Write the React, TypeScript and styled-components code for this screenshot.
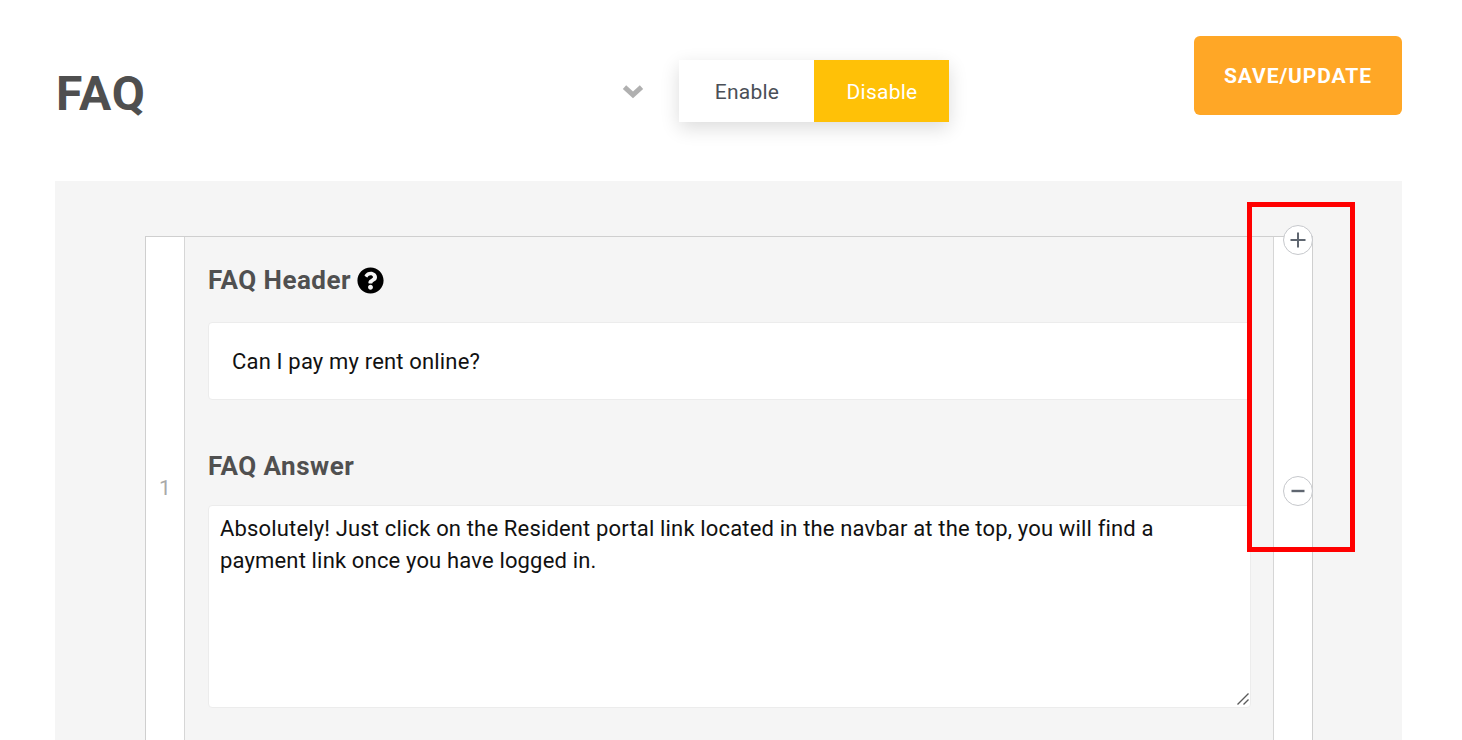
import React from "react";
import styled, { createGlobalStyle } from "styled-components";
import { FaQuestionCircle } from "react-icons/fa";

const Global = createGlobalStyle`
  html, body { margin: 0; height: 740px; overflow: hidden; background: #fff; }
  body { font-family: Roboto, "Liberation Sans", sans-serif; }
`;

const Page = styled.div`
  position: relative;
  padding: 36px 60px 0 55px;
`;

const Header = styled.header`
  display: flex;
  align-items: flex-start;
  height: 145px;
`;

const Title = styled.h1`
  flex: 1;
  margin: 28px 0 0 1px;
  font-size: 48px;
  line-height: 60px;
  font-weight: 700;
  letter-spacing: 1px;
  color: #4f4f4f;
`;

const Chevron = styled.svg`
  display: block;
  width: 22px;
  height: 15px;
  margin: 48px 35px 0 0;
`;

const Toggle = styled.div`
  display: flex;
  margin-top: 24px;
  box-shadow: 0 6px 18px rgba(0, 0, 0, 0.14);
`;

const ToggleOption = styled.div<{ $active?: boolean }>`
  width: 135px;
  height: 62px;
  padding: 1px 0 0 1px;
  box-sizing: border-box;
  display: flex;
  align-items: center;
  justify-content: center;
  font-size: 21px;
  letter-spacing: 0.25px;
  background: ${(p) => (p.$active ? "#ffc107" : "#fff")};
  color: ${(p) => (p.$active ? "#fff" : "#4a4f57")};
`;

const SaveButton = styled.button`
  width: 208px;
  height: 79px;
  margin-left: 245px;
  border: 0;
  border-radius: 6px;
  background: #ffa726;
  color: #fff;
  font: 700 21px Roboto, sans-serif;
  letter-spacing: 0.9px;
`;

const Panel = styled.section`
  height: 560px;
  padding: 55px 89px 0 90px;
  background: #f5f5f5;
`;

const Row = styled.div`
  display: flex;
  height: 505px;
  border: 1px solid #cfcfcf;
`;

const IndexCell = styled.div`
  width: 39px;
  height: 503px;
  flex: none;
  display: flex;
  justify-content: center;
  padding-top: 239px;
  box-sizing: border-box;
  background: #fff;
  border-right: 1px solid #d6d6d6;
  color: #a9a9a9;
  font-size: 21px;
`;

const Fields = styled.div`
  flex: 1;
  min-width: 0;
  padding: 0 22px 0 23px;
`;

const FieldLabel = styled.label`
  display: flex;
  align-items: center;
  gap: 6px;
  font-size: 26px;
  line-height: 32px;
  font-weight: 700;
  letter-spacing: 0.5px;
  color: #505050;
`;

const HeaderLabel = styled(FieldLabel)`
  margin-top: 27px;
`;

const AnswerLabel = styled(FieldLabel)`
  margin-top: 50px;
`;

const Help = styled.span`
  display: flex;
  color: #000;
  font-size: 27px;
`;

const TextInput = styled.input`
  display: block;
  width: 100%;
  height: 78px;
  margin-top: 26px;
  padding: 0 23px;
  box-sizing: border-box;
  border: 1px solid #ececec;
  border-radius: 4px;
  background: #fff;
  outline: 0;
  color: #111;
  font: 400 22px Roboto, sans-serif;
  letter-spacing: 0.17px;
`;

const TextAreaWrap = styled.div`
  position: relative;
  margin-top: 23px;
`;

const TextArea = styled.textarea`
  display: block;
  width: 100%;
  height: 203px;
  padding: 7px 11px;
  box-sizing: border-box;
  border: 1px solid #ececec;
  border-radius: 4px;
  background: #fff;
  outline: 0;
  resize: none;
  color: #111;
  font: 400 22px/32px Roboto, sans-serif;
  letter-spacing: 0.16px;
`;

const Grip = styled.svg`
  position: absolute;
  right: 2px;
  bottom: 3px;
  width: 12px;
  height: 12px;
`;

const ActionCell = styled.div`
  position: relative;
  width: 38px;
  flex: none;
  background: #fff;
  border-left: 1px solid #d6d6d6;
`;

const RoundAction = styled.button<{ $top: number }>`
  position: absolute;
  top: ${(p) => p.$top}px;
  left: 9px;
  width: 30px;
  height: 30px;
  padding: 0;
  display: flex;
  align-items: center;
  justify-content: center;
  border: 1px solid #c6c8cc;
  border-radius: 50%;
  background: #fff;
`;

const Highlight = styled.div`
  position: absolute;
  left: 1247px;
  top: 202px;
  width: 108px;
  height: 350px;
  box-sizing: border-box;
  border: 5px solid #ff0000;
  pointer-events: none;
`;

export default function App() {
  return (
    <Page>
      <Global />
      <Header>
        <Title>FAQ</Title>
        <Chevron viewBox="0 0 22 15">
          <path d="M2.5 3.2L11 10.8L19.5 3.2" fill="none" stroke="#b0b0b0" strokeWidth="5" />
        </Chevron>
        <Toggle>
          <ToggleOption>Enable</ToggleOption>
          <ToggleOption $active>Disable</ToggleOption>
        </Toggle>
        <SaveButton>SAVE/UPDATE</SaveButton>
      </Header>
      <Panel>
        <Row>
          <IndexCell>1</IndexCell>
          <Fields>
            <HeaderLabel>
              FAQ Header
              <Help><FaQuestionCircle /></Help>
            </HeaderLabel>
            <TextInput defaultValue="Can I pay my rent online?" />
            <AnswerLabel>FAQ Answer</AnswerLabel>
            <TextAreaWrap>
              <TextArea defaultValue="Absolutely! Just click on the Resident portal link located in the navbar at the top, you will find a payment link once you have logged in." />
              <Grip viewBox="0 0 12 12">
                <path d="M0.5 11.5L11.5 0.5M6.5 11.5L11.5 6.5" stroke="#5a5a5a" strokeWidth="1.4" fill="none" />
              </Grip>
            </TextAreaWrap>
          </Fields>
          <ActionCell>
            <RoundAction $top={-12} aria-label="Add">
              <svg width="18" height="18" viewBox="0 0 18 18"><path d="M9 1.5v15M1.5 9h15" stroke="#5f6670" strokeWidth="2" /></svg>
            </RoundAction>
            <RoundAction $top={239} aria-label="Remove">
              <svg width="18" height="18" viewBox="0 0 18 18"><path d="M2.5 9h13" stroke="#5f6670" strokeWidth="2.4" /></svg>
            </RoundAction>
          </ActionCell>
        </Row>
      </Panel>
      <Highlight />
    </Page>
  );
}
